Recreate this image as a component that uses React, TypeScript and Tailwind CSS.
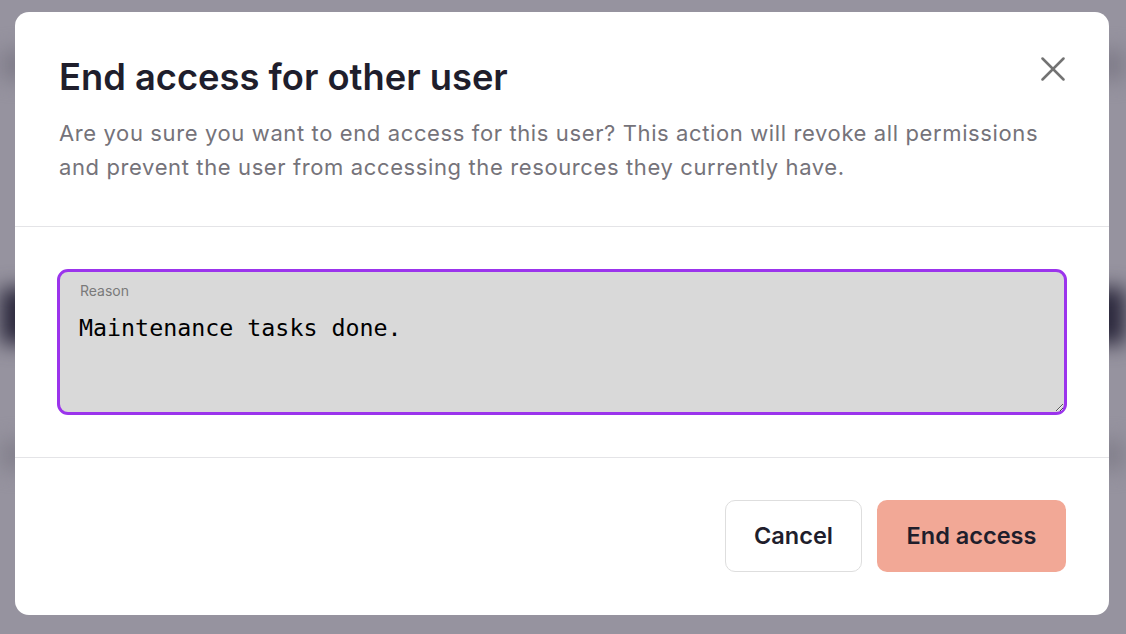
import React from "react"

function CloseIcon() {
    return (
        <svg width="24" height="24" viewBox="0 0 24 24" fill="none" stroke="#737373" strokeWidth="2.5" strokeLinecap="round">
            <path d="M1.5 1.5 L22.5 22.5" />
            <path d="M22.5 1.5 L1.5 22.5" />
        </svg>
    )
}

export default function App() {
    return (
        <div className="relative w-[1126px] h-[634px] overflow-hidden bg-[#96939f] flex items-center justify-center" style={{ fontFamily: "Inter, 'Noto Sans', sans-serif" }}>
            {/* blurred page behind the overlay */}
            <div className="absolute left-0 right-0 top-[288px] h-[56px] bg-[#2b283c] blur-[10px]" />
            <div className="absolute left-0 right-0 top-[50px] h-[30px] bg-[#7f7c89] blur-[10px]" />
            <div className="absolute left-0 right-0 top-[440px] h-[30px] bg-[#83808c] blur-[10px]" />

            <div className="relative flex flex-col w-[1094px] h-[603px] bg-white rounded-[14px] mt-[-7px] ml-[-2px]">
                <div className="relative px-[44px] pt-[43px] h-[215px] border-b border-[#e4e4e7]">
                    <h1 className="text-[36.3px] leading-[44px] font-semibold text-[#1f1e2c]">End access for other user</h1>
                    <p className="mt-[17px] text-[22px] leading-[34px] tracking-[0.028em] text-[#75737a]">
                        Are you sure you want to end access for this user? This action will revoke all permissions and prevent the user from accessing the resources they currently have.
                    </p>
                    <button className="absolute right-[44px] top-[45px] p-0 cursor-pointer">
                        <CloseIcon />
                    </button>
                </div>

                <div className="px-[42px] pt-[42px] h-[231px] border-b border-[#e4e4e7]">
                    <div className="relative">
                        <label className="absolute left-[23px] top-[14px] text-[14px] leading-[16px] text-[#7a7a7a]">Reason</label>
                        <textarea
                            defaultValue="Maintenance tasks done."
                            className="block w-full h-[146px] rounded-[11px] border-[3px] border-[#9b34ec] bg-[#d9d9d9] pt-[40px] px-[19px] text-[23.3px] leading-[32px] text-black outline-none"
                            style={{ fontFamily: "'DejaVu Sans Mono', monospace" }}
                        />
                    </div>
                </div>

                <div className="flex flex-1 justify-end items-start gap-[15px] px-[43px] pt-[42px]">
                    <button className="w-[137px] h-[72px] rounded-[10px] border border-[#dedede] bg-white text-[23.5px] font-semibold text-[#1f1e2c]">Cancel</button>
                    <button className="w-[189px] h-[72px] rounded-[10px] bg-[#f2a896] text-[23.5px] font-semibold text-[#1f1e2c]">End access</button>
                </div>
            </div>
        </div>
    )
}
